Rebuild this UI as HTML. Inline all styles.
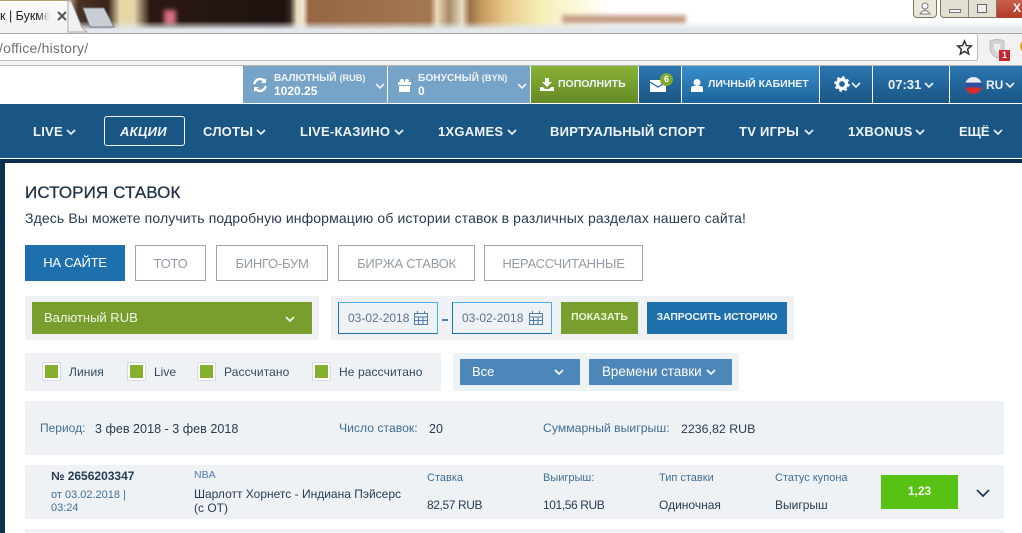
<!DOCTYPE html>
<html lang="ru"><head><meta charset="utf-8"><title>История ставок</title>
<style>
html,body{margin:0;padding:0;width:1022px;height:533px;overflow:hidden;background:#fff}
body{position:relative;font-family:"Liberation Sans",sans-serif}
.b{position:absolute;box-sizing:border-box}
.t{position:absolute;white-space:nowrap;line-height:16px;height:16px}
svg{position:absolute;overflow:visible}
.nav{color:#f0f4f8;font-weight:bold;font-size:13px;top:124px;letter-spacing:.25px}
.hd{color:#eef3f8;font-weight:bold;font-size:10.5px}
.tab{position:absolute;top:245px;height:36px;box-sizing:border-box;border:1px solid #9aa4ae;color:#939ca6;font-size:13px;letter-spacing:-.25px;line-height:35px;text-align:center}
.lbl{color:#3f6f96;font-size:11px}
.val{color:#263d52;font-size:12px}
.chk{position:absolute;top:363px;width:17px;height:17px;box-sizing:border-box;background:#84b02d;border:2px solid #fff;outline:1px solid #d5dce2}
.ck{color:#34495e;font-size:12px;top:364px;letter-spacing:.1px}
</style></head><body>
<!-- browser frame -->
<div class="b" style="left:0;top:0;width:1022px;height:30px;background:linear-gradient(90deg,#c09a70 0,#c09a70 70px,#4a3226 78px,#3a2518 108px,#e6d6a8 120px,#e6d6a8 134px,#2a1812 150px,#1e1210 284px,#3a2a20 290px,#eadcc0 297px,#f0e6d0 303px,#976643 309px,#a37850 430px,#ead9bb 437px,#a88a68 449px,#e8dcc0 462px,#9a7048 470px,#c89a60 482px,#e8c888 505px,#f6efb8 540px,#fbf8d8 575px,#fff 610px,#fff 1022px)"></div>
<div class="b" style="left:562px;top:15px;width:124px;height:9px;background:#c8a08a;filter:blur(2px)"></div>
<div class="b" style="left:164px;top:10px;width:12px;height:15px;background:#d8707e;filter:blur(2.5px)"></div>
<div class="b" style="left:0;top:21px;width:1022px;height:12px;background:linear-gradient(rgba(226,231,235,0) 0,rgba(226,231,235,1) 70%,#e6e9ec 100%)"></div>
<div class="b" style="left:0;top:1px;width:70px;height:32px;background:linear-gradient(#fafafa,#f1f1f1)"></div>
<svg width="30" height="30" style="left:68px;top:1px"><path d="M0 0H3L14 27L19 31H0Z" fill="#f1f1f1" stroke="#a9acb0"/></svg>
<svg width="36" height="24" style="left:81px;top:6px"><path d="M2 2H23L33 21H9Z" fill="#c9ced4" stroke="#6f7c88"/></svg>
<div class="t" style="left:0;top:8px;color:#222;font-size:12.5px;width:50px;overflow:hidden">к | Букме</div>
<div class="b" style="left:38px;top:6px;width:12px;height:18px;background:linear-gradient(90deg,rgba(243,243,243,0),#f3f3f3)"></div>
<svg width="10" height="10" style="left:57px;top:11px" fill="none" stroke="#555" stroke-width="2"><path d="M1 1L9 9M9 1L1 9"/></svg>
<div class="b" style="left:0;top:33px;width:1022px;height:33px;background:#f2f2f2;border-top:1px solid #a8a8a8;border-bottom:1px solid #b5b5b5"></div>
<div class="b" style="left:0;top:34px;width:978px;height:27px;background:#fff;border:1px solid #bdbdbd;border-left:0;border-top:0;border-radius:0 3px 3px 0"></div>
<div class="t" style="left:-1px;top:40px;color:#6f6f6f;font-size:14px;letter-spacing:.2px">/office/history/</div>
<svg width="15" height="15" style="left:957px;top:40px"><path d="M7.5 1L9.4 5.6L14.3 6L10.6 9.2L11.7 14L7.5 11.4L3.3 14L4.4 9.2L.7 6L5.6 5.6Z" fill="none" stroke="#333" stroke-width="1.5"/></svg>
<svg width="18" height="20" style="left:989px;top:39px"><path d="M1 2Q8 -1 15 2V10Q14 16 8 19Q2 16 1 10Z" fill="#d4d4d4" stroke="#bbb"/><path d="M5 5H11V10L8 14L5 10Z" fill="#eee"/></svg>
<div class="b" style="left:999px;top:50px;width:11px;height:11px;background:#c8252e;color:#fff;font-size:9px;font-weight:bold;text-align:center;line-height:11px">1</div>
<div class="b" style="left:1020px;top:41px;width:8px;height:11px;border-radius:50%;background:#f0a020"></div>
<!-- window buttons -->
<div class="b" style="left:913px;top:0;width:24px;height:18px;background:#ece8d8;border:1px solid #7d7768;border-top:0;border-radius:0 0 4px 4px"></div>
<svg width="12" height="12" style="left:919px;top:2px"><circle cx="6" cy="4" r="3" fill="#fff" stroke="#777"/><path d="M1 12Q6 5 11 12Z" fill="#fff" stroke="#777"/></svg>
<div class="b" style="left:940px;top:0;width:57px;height:18px;background:#e3e0d2;border:1px solid #7d7768;border-top:0;border-radius:0 0 0 4px"></div>
<div class="b" style="left:968px;top:0;width:1px;height:17px;background:#8a8678"></div>
<div class="b" style="left:949px;top:9px;width:12px;height:4px;background:#f4f4f4;border:1px solid #777"></div>
<div class="b" style="left:977px;top:4px;width:10px;height:9px;background:#eee;border:1px solid #666"></div>
<div class="b" style="left:997px;top:0;width:25px;height:18px;background:linear-gradient(#c9604c,#b23a28)"></div>
<div class="t" style="left:1013px;top:0;color:#fff;font-size:12px;font-weight:bold">X</div>
<!-- header bar -->
<div class="b" style="left:243px;top:66px;width:144px;height:37px;background:#76a3c8"></div>
<div class="b" style="left:388px;top:66px;width:142px;height:37px;background:#76a3c8"></div>
<div class="b" style="left:531px;top:66px;width:107px;height:37px;background:linear-gradient(#8ab336,#648a26)"></div>
<div class="b" style="left:639px;top:66px;width:42px;height:37px;background:linear-gradient(#2a76b2,#1a5684)"></div>
<div class="b" style="left:682px;top:66px;width:137px;height:37px;background:linear-gradient(#3a8eca,#1c649c)"></div>
<div class="b" style="left:820px;top:66px;width:52px;height:37px;background:linear-gradient(#2a76b2,#1a5684)"></div>
<div class="b" style="left:873px;top:66px;width:76px;height:37px;background:linear-gradient(#2a76b2,#1a5684)"></div>
<div class="b" style="left:950px;top:66px;width:72px;height:37px;background:linear-gradient(#2a76b2,#1a5684)"></div>
<svg width="16" height="14" style="left:252px;top:78px" fill="none" stroke="#fff" stroke-width="2.4"><path d="M2 6Q4 1 8 1Q11 1 13 4"/><path d="M14 8Q12 13 8 13Q5 13 3 10"/><path d="M14 0V5H9" fill="#fff" stroke="none"/><path d="M2 14V9H7" fill="#fff" stroke="none"/></svg>
<div class="t hd" style="left:274px;top:70px;font-size:10.2px">ВАЛЮТНЫЙ <span style="font-size:9.2px">(RUB)</span></div>
<div class="t" style="left:274px;top:83px;color:#fff;font-weight:bold;font-size:12px">1020.25</div>
<svg width="10" height="6" style="left:375px;top:83px" fill="none" stroke="#eef3f8" stroke-width="1.6"><path d="M1 1L5 5L9 1"/></svg>
<svg width="13" height="13" style="left:398px;top:79px" fill="#fff"><rect x="0" y="3" width="13" height="3"/><rect x="1" y="7" width="11" height="6"/><circle cx="4" cy="2" r="2"/><circle cx="9" cy="2" r="2"/></svg>
<div class="t hd" style="left:418px;top:70px;font-size:10.2px">БОНУСНЫЙ <span style="font-size:9.2px">(BYN)</span></div>
<div class="t" style="left:418px;top:83px;color:#fff;font-weight:bold;font-size:12px">0</div>
<svg width="10" height="6" style="left:517px;top:83px" fill="none" stroke="#eef3f8" stroke-width="1.6"><path d="M1 1L5 5L9 1"/></svg>
<svg width="14" height="13" style="left:540px;top:78px" fill="#fff"><path d="M5 0H9V4H12L7 9L2 4H5Z"/><path d="M0 9H3L5 11H9L11 9H14V13H0Z"/></svg>
<div class="t hd" style="left:558px;top:76px">ПОПОЛНИТЬ</div>
<svg width="16" height="12" style="left:650px;top:80px"><path d="M0 0H16V12H0Z" fill="#fff"/><path d="M0 2L8 7L16 2" fill="none" stroke="#1f6a9e" stroke-width="1.2"/></svg>
<div class="b" style="left:660px;top:73px;width:13px;height:13px;border-radius:50%;background:#7ea82e;color:#fff;font-size:9px;font-weight:bold;text-align:center;line-height:13px">6</div>
<svg width="12" height="13" style="left:691px;top:79px" fill="#fff"><circle cx="6" cy="3.5" r="3.5"/><path d="M0 13V9Q0 7 3 7H9Q12 7 12 9V13Z"/></svg>
<div class="t hd" style="left:708px;top:76px">ЛИЧНЫЙ КАБИНЕТ</div>
<svg width="16" height="16" style="left:834px;top:76px"><circle cx="8" cy="8" r="4.5" fill="none" stroke="#fff" stroke-width="3.2"/><circle cx="8" cy="8" r="6.4" fill="none" stroke="#fff" stroke-width="2.6" stroke-dasharray="2.5 2.5"/></svg>
<svg width="10" height="6" style="left:851px;top:82px" fill="none" stroke="#eef3f8" stroke-width="1.6"><path d="M1 1L5 5L9 1"/></svg>
<div class="t" style="left:888px;top:77px;color:#eef3f8;font-weight:bold;font-size:13px">07:31</div>
<svg width="10" height="6" style="left:924px;top:82px" fill="none" stroke="#eef3f8" stroke-width="1.6"><path d="M1 1L5 5L9 1"/></svg>
<div class="b" style="left:965px;top:77px;width:17px;height:17px;border-radius:50%;background:linear-gradient(#e8e8ee 0,#e8e8ee 33%,#2d4fa0 34%,#2d4fa0 62%,#d52b2b 63%)"></div>
<div class="t hd" style="left:986px;top:77px;font-size:12px">RU</div>
<svg width="10" height="6" style="left:1005px;top:82px" fill="none" stroke="#eef3f8" stroke-width="1.6"><path d="M1 1L5 5L9 1"/></svg>
<!-- nav -->
<div class="b" style="left:0;top:104px;width:1022px;height:54px;background:#1a5684"></div>
<div class="b" style="left:0;top:159px;width:1022px;height:4px;background:#0d3050"></div>
<div class="b" style="left:0;top:159px;width:5px;height:374px;background:#0d3050"></div>
<div class="t nav" style="left:33px">LIVE</div>
<svg width="10" height="6" style="left:66px;top:129px" fill="none" stroke="#f0f4f8" stroke-width="1.6"><path d="M1 1L5 5L9 1"/></svg>
<div class="b" style="left:104px;top:116px;width:81px;height:30px;border:1px solid #f0f4f8;border-radius:3px"></div>
<div class="t nav" style="left:120px;font-style:italic">АКЦИИ</div>
<div class="t nav" style="left:203px">СЛОТЫ</div>
<svg width="10" height="6" style="left:256px;top:129px" fill="none" stroke="#f0f4f8" stroke-width="1.6"><path d="M1 1L5 5L9 1"/></svg>
<div class="t nav" style="left:300px">LIVE-КАЗИНО</div>
<svg width="10" height="6" style="left:394px;top:129px" fill="none" stroke="#f0f4f8" stroke-width="1.6"><path d="M1 1L5 5L9 1"/></svg>
<div class="t nav" style="left:438px">1XGAMES</div>
<svg width="10" height="6" style="left:507px;top:129px" fill="none" stroke="#f0f4f8" stroke-width="1.6"><path d="M1 1L5 5L9 1"/></svg>
<div class="t nav" style="left:550px">ВИРТУАЛЬНЫЙ СПОРТ</div>
<div class="t nav" style="left:739px">TV ИГРЫ</div>
<svg width="10" height="6" style="left:804px;top:129px" fill="none" stroke="#f0f4f8" stroke-width="1.6"><path d="M1 1L5 5L9 1"/></svg>
<div class="t nav" style="left:848px">1XBONUS</div>
<svg width="10" height="6" style="left:915px;top:129px" fill="none" stroke="#f0f4f8" stroke-width="1.6"><path d="M1 1L5 5L9 1"/></svg>
<div class="t nav" style="left:959px;letter-spacing:0">ЕЩЁ</div>
<svg width="10" height="6" style="left:993px;top:129px" fill="none" stroke="#f0f4f8" stroke-width="1.6"><path d="M1 1L5 5L9 1"/></svg>
<!-- content -->
<div class="t" style="left:25px;top:185px;color:#1e3347;font-size:17px;letter-spacing:.1px;-webkit-text-stroke:.3px #1e3347">ИСТОРИЯ СТАВОК</div>
<div class="t" style="left:25px;top:210px;color:#263d52;font-size:14px;letter-spacing:.12px">Здесь Вы можете получить подробную информацию об истории ставок в различных разделах нашего сайта!</div>
<div class="tab" style="left:25px;width:100px;background:#1e70ad;border:0;color:#fff;line-height:36px">НА САЙТЕ</div>
<div class="tab" style="left:135px;width:71px">ТОТО</div>
<div class="tab" style="left:216px;width:112px">БИНГО-БУМ</div>
<div class="tab" style="left:338px;width:137px">БИРЖА СТАВОК</div>
<div class="tab" style="left:484px;width:159px">НЕРАССЧИТАННЫЕ</div>
<div class="b" style="left:25px;top:296px;width:294px;height:44px;background:#eff2f5"></div>
<div class="b" style="left:32px;top:302px;width:280px;height:32px;background:#789f2d"></div>
<div class="t" style="left:44px;top:310px;color:#f2f6e8;font-size:13px">Валютный RUB</div>
<svg width="10" height="6" style="left:285px;top:316px" fill="none" stroke="#f2f6e8" stroke-width="1.7"><path d="M1 1L5 5L9 1"/></svg>
<div class="b" style="left:331px;top:296px;width:463px;height:44px;background:#eff2f5"></div>
<div class="b" style="left:338px;top:302px;width:100px;height:32px;border:1px solid;border-color:#46b0ea #46b0ea #1e70ad #1e70ad"></div>
<div class="t" style="left:348px;top:310px;color:#5b7390;font-size:12px">03-02-2018</div>
<svg width="14" height="14" style="left:414px;top:311px" fill="none" stroke="#4f7fa8"><rect x=".5" y="2.5" width="13" height="11"/><path d="M.5 6H13.5M.5 9.5H13.5M4.5 6V13.5M9 6V13.5M3.5 0V3M10.5 0V3"/></svg>
<div class="b" style="left:442px;top:319px;width:6px;height:2px;background:#4f7fa8"></div>
<div class="b" style="left:452px;top:302px;width:100px;height:32px;border:1px solid;border-color:#46b0ea #46b0ea #1e70ad #1e70ad"></div>
<div class="t" style="left:462px;top:310px;color:#5b7390;font-size:12px">03-02-2018</div>
<svg width="14" height="14" style="left:529px;top:311px" fill="none" stroke="#4f7fa8"><rect x=".5" y="2.5" width="13" height="11"/><path d="M.5 6H13.5M.5 9.5H13.5M4.5 6V13.5M9 6V13.5M3.5 0V3M10.5 0V3"/></svg>
<div class="b" style="left:561px;top:302px;width:77px;height:32px;background:#789f2d;color:#eef4dc;font-size:10.4px;font-weight:bold;text-align:center;line-height:32px">ПОКАЗАТЬ</div>
<div class="b" style="left:647px;top:302px;width:140px;height:32px;background:#1e70ad;color:#eef4f9;font-size:10.3px;font-weight:bold;text-align:center;line-height:32px">ЗАПРОСИТЬ ИСТОРИЮ</div>
<div class="b" style="left:25px;top:353px;width:416px;height:38px;background:#eff2f5"></div>
<div class="chk" style="left:43px"></div><div class="t ck" style="left:69px">Линия</div>
<div class="chk" style="left:128px"></div><div class="t ck" style="left:154px;letter-spacing:0">Live</div>
<div class="chk" style="left:198px"></div><div class="t ck" style="left:224px">Рассчитано</div>
<div class="chk" style="left:313px"></div><div class="t ck" style="left:339px">Не рассчитано</div>
<div class="b" style="left:453px;top:353px;width:286px;height:38px;background:#eff2f5"></div>
<div class="b" style="left:460px;top:359px;width:120px;height:26px;background:#4d87b9"></div>
<div class="t" style="left:472px;top:364px;color:#fff;font-size:13px">Все</div>
<svg width="10" height="6" style="left:554px;top:369px" fill="none" stroke="#fff" stroke-width="1.6"><path d="M1 1L5 5L9 1"/></svg>
<div class="b" style="left:589px;top:359px;width:143px;height:26px;background:#4d87b9"></div>
<div class="t" style="left:602px;top:364px;color:#fff;font-size:13.4px">Времени ставки</div>
<svg width="10" height="6" style="left:706px;top:369px" fill="none" stroke="#fff" stroke-width="1.6"><path d="M1 1L5 5L9 1"/></svg>
<div class="b" style="left:25px;top:401px;width:979px;height:54px;background:#eff2f5"></div>
<div class="t lbl" style="left:40px;top:420px;font-size:12px">Период:</div>
<div class="t val" style="left:95px;top:421px;font-size:12.6px">3 фев 2018 - 3 фев 2018</div>
<div class="t lbl" style="left:339px;top:420px;font-size:12.2px">Число ставок:</div>
<div class="t val" style="left:429px;top:421px;font-size:12.5px">20</div>
<div class="t lbl" style="left:543px;top:420px;font-size:12.25px">Суммарный выигрыш:</div>
<div class="t val" style="left:681px;top:421px;font-size:12.4px">2236,82 RUB</div>
<div class="b" style="left:25px;top:465px;width:979px;height:54px;background:#eff2f5"></div>
<div class="b" style="left:25px;top:529px;width:979px;height:4px;background:#eff2f5"></div>
<div class="t" style="left:51px;top:468px;color:#263d52;font-size:12px;font-weight:bold">№ 2656203347</div>
<div class="t lbl" style="left:51px;top:487px">от 03.02.2018 |</div>
<div class="t lbl" style="left:51px;top:500px">03:24</div>
<div class="t" style="left:194px;top:467px;color:#5278b5;font-size:10.5px">NBA</div>
<div class="t val" style="left:194px;top:486px">Шарлотт Хорнетс - Индиана Пэйсерс</div>
<div class="t val" style="left:194px;top:500px">(с ОТ)</div>
<div class="t lbl" style="left:427px;top:470px">Ставка</div>
<div class="t val" style="left:427px;top:497px;letter-spacing:-.4px">82,57 RUB</div>
<div class="t lbl" style="left:543px;top:470px">Выигрыш:</div>
<div class="t val" style="left:543px;top:497px;letter-spacing:-.4px">101,56 RUB</div>
<div class="t lbl" style="left:659px;top:470px">Тип ставки</div>
<div class="t val" style="left:659px;top:497px">Одиночная</div>
<div class="t lbl" style="left:775px;top:470px">Статус купона</div>
<div class="t val" style="left:775px;top:497px">Выигрыш</div>
<div class="b" style="left:881px;top:475px;width:77px;height:34px;background:#58c214;color:#f4fbe8;font-size:12px;font-weight:bold;text-align:center;line-height:33px">1,23</div>
<svg width="14" height="8" style="left:976px;top:489px" fill="none" stroke="#1e3a55" stroke-width="1.8"><path d="M1 1L7 7L13 1"/></svg>
</body></html>
